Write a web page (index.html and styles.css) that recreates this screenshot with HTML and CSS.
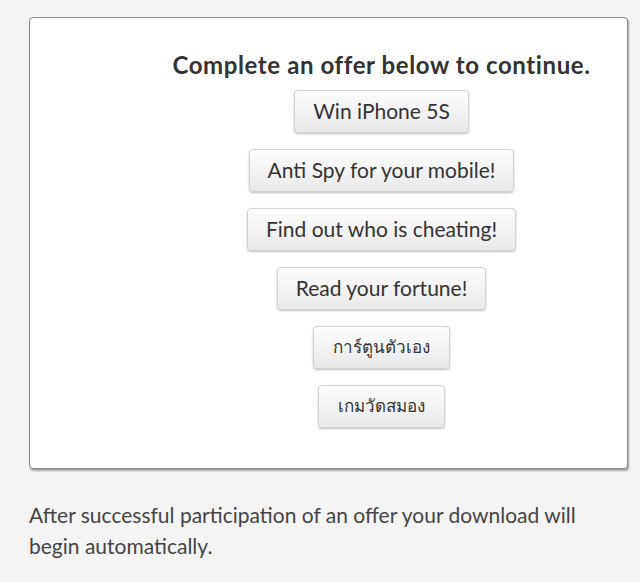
FILE: index.html
```html
<!DOCTYPE html>
<html lang="en">
<head>
  <meta charset="UTF-8" />
  <meta name="viewport" content="width=device-width, initial-scale=1.0" />
  <title>Download</title>
  <link rel="stylesheet" href="styles.css">
</head>
<body>
  <div class="offer-box">
    <h2>Complete an offer below to continue.</h2>
    <div class="offers">
      <a href="#" class="btn">Win iPhone 5S</a>
      <a href="#" class="btn">Anti Spy for your mobile!</a>
      <a href="#" class="btn">Find out who is cheating!</a>
      <a href="#" class="btn">Read your fortune!</a>
      <a href="#" class="btn btn-th">การ์ตูนตัวเอง</a>
      <a href="#" class="btn btn-th">เกมวัดสมอง</a>
    </div>
  </div>
  <p class="note">After successful participation of an offer your download will begin automatically.</p>
</body>
</html>
```

FILE: styles.css
```css
body {
  font-family: Lato, 'Noto Sans', sans-serif;
  background: #f4f4f4;
  color: #333;
  margin: 0;
  padding: 17px 12px 0 29px;
}

.offer-box {
  background: #fff;
  border: 1px solid #8a8a8a;
  border-radius: 4px;
  box-shadow: 1px 2px 2px rgba(0, 0, 0, 0.35);
  padding: 32px 0 38px 106px;
  height: 380px;
}

.offer-box h2 {
  margin: 0 0 10px;
  font-size: 24px;
  line-height: 30px;
  font-weight: bold;
  letter-spacing: 0.6px;
  text-align: center;
  color: #333;
}

.offers {
  display: flex;
  flex-direction: column;
  align-items: center;
  gap: 16px;
}

.btn {
  display: inline-block;
  padding: 8px 18px 9px;
  font-size: 21px;
  line-height: 24px;
  color: #333;
  text-decoration: none;
  background: linear-gradient(#fdfdfd, #e9e9e9);
  border: 1px solid #d2d2d2;
  border-radius: 4px;
  box-shadow: 0 1px 2px rgba(0, 0, 0, 0.25);
}

.btn-th {
  font-size: 17px;
  padding: 8px 19px 9px;
}

.note {
  margin: 30px 0 0;
  font-size: 21px;
  line-height: 31px;
  color: #444;
  max-width: 570px;
}
```
